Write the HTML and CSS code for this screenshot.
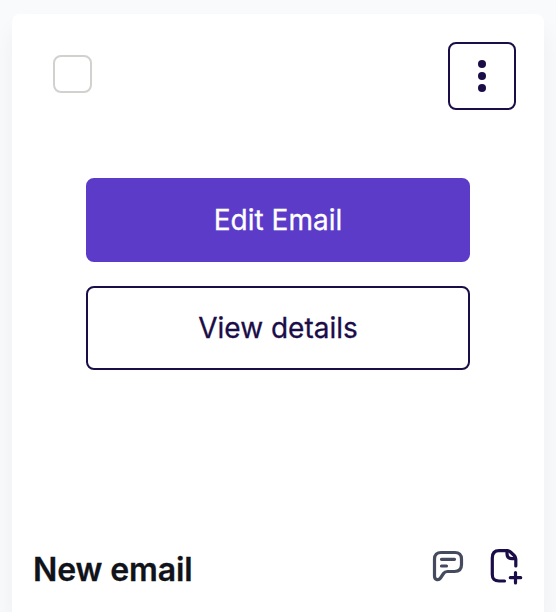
FILE: index.html
```html
<!DOCTYPE html>
<html lang="en">
<head>
    <meta charset="UTF-8">
    <meta name="viewport" content="width=device-width, initial-scale=1.0">
    <title>Emails</title>
    <link rel="stylesheet" href="styles.css">
</head>
<body>
<div class="email-card">
    <div class="card-top">
        <input type="checkbox" class="card-checkbox" aria-label="Select email">
        <button type="button" class="menu-btn" aria-label="More options">
            <svg width="8" height="32" viewBox="0 0 8 32" fill="currentColor">
                <circle cx="4" cy="4" r="4"/>
                <circle cx="4" cy="16" r="4"/>
                <circle cx="4" cy="28" r="4"/>
            </svg>
        </button>
    </div>

    <div class="card-actions">
        <button type="button" class="btn btn-primary">Edit Email</button>
        <button type="button" class="btn btn-outline">View details</button>
    </div>

    <div class="card-footer">
        <h2 class="card-title">New email</h2>
        <div class="card-icons">
            <svg class="icon-comment" width="32" height="32" viewBox="0 0 32 32">
                <path d="M9 2.500H23C27 2.500 29.500 5 29.500 9V14.500C29.500 19 27 21.500 22.500 21.500H15.500C13.500 21.500 12.500 22 11.500 23.500L8.500 28C7.500 29.500 6 30 4.500 29.500C3 29 2.500 28 2.500 26V9C2.500 5 5 2.500 9 2.500Z"/>
                <path d="M9.500 9.300H22.500M9.500 16H14.500"/>
            </svg>
            <svg class="icon-file" width="34" height="38" viewBox="0 0 34 38">
                <path d="M15.500 33H10C5.500 33 3.300 31 3.300 26.500V10C3.300 5 5.500 2.700 10 2.700H18C19.500 2.700 20.500 3 21.500 4L25.200 7.500C26.200 8.500 26.800 9.500 26.800 11V18"/>
                <path d="M18 2.700V5.500C18 9 19.500 10.700 23 10.700H26.500"/>
                <path d="M26.500 24.500V35M21.300 29.700H31.700"/>
            </svg>
        </div>
    </div>
</div>
</body>
</html>
```

FILE: styles.css
```css
* {
    box-sizing: border-box;
}
body {
    margin: 0;
    padding: 14px 12px 0;
    height: 100vh;
    background-color: #f8fafc;
    font-family: Inter, "Liberation Sans", sans-serif;
}
.email-card {
    height: 100%;
    background: #fff;
    border-radius: 8px 8px 0 0;
    box-shadow: 0 16px 24px rgba(15, 23, 42, 0.05);
}
.card-top {
    display: flex;
    justify-content: space-between;
    align-items: flex-start;
    padding: 28px 28px 0 41px;
}
.card-checkbox {
    appearance: none;
    width: 39px;
    height: 38px;
    margin: 13px 0 0;
    border: 2px solid #d1d1cd;
    border-radius: 8px;
    background: #fff;
}
.menu-btn {
    display: flex;
    justify-content: center;
    align-items: center;
    width: 68px;
    height: 68px;
    padding: 0;
    border: 2px solid #1b0d48;
    border-radius: 8px;
    background: #fff;
    color: #1b0d48;
    cursor: pointer;
}
.card-actions {
    display: flex;
    flex-direction: column;
    gap: 24px;
    padding: 68px 74px 0;
}
.btn {
    height: 84px;
    padding: 0;
    border: 2px solid #1b0d48;
    border-radius: 8px;
    font-family: inherit;
    font-size: 28px;
    -webkit-text-stroke: 0.3px currentColor;
    cursor: pointer;
}
.btn-primary {
    border-color: #5b3bc7;
    background-color: #5b3bc7;
    color: #fff;
}
.btn-outline {
    background-color: #fff;
    color: #1b0d48;
}
.card-footer {
    display: flex;
    justify-content: space-between;
    align-items: flex-start;
    padding: 178px 21px 0 21px;
}
.card-title {
    margin: 2px 0 0;
    color: #11131a;
    font-size: 32px;
    font-weight: 600;
    line-height: 40px;
    letter-spacing: -0.1px;
    -webkit-text-stroke: 0.3px currentColor;
}
.card-icons {
    display: flex;
    gap: 25px;
}
.card-icons svg {
    fill: none;
    stroke-width: 3.2;
    stroke-linecap: round;
    stroke-linejoin: round;
}
.icon-comment {
    margin-top: 2px;
    stroke: #454b5e;
}
.icon-file {
    stroke: #1b0d48;
}
```
